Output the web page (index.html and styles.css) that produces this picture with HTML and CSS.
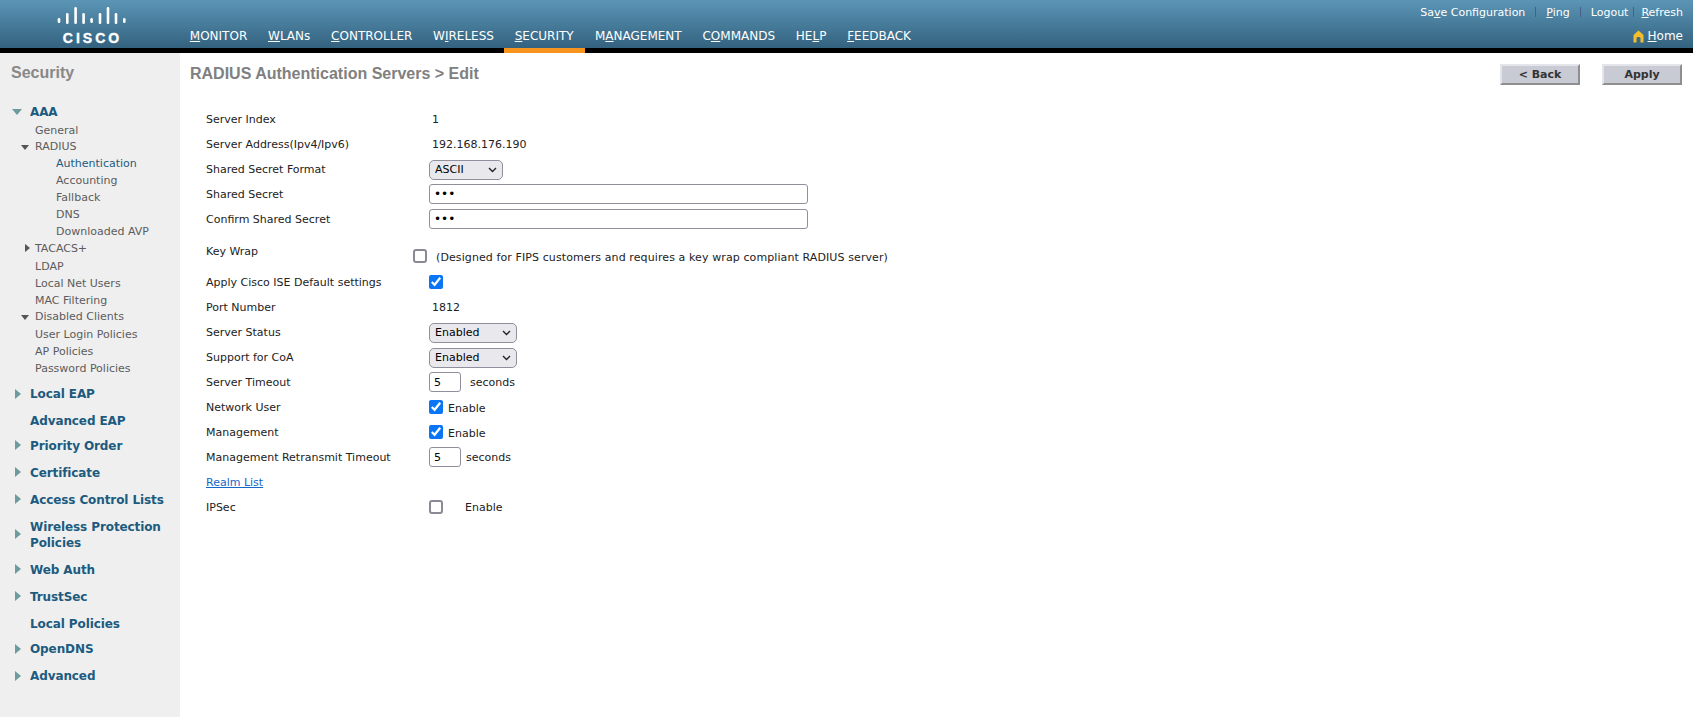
FILE: index.html
```html
<!DOCTYPE html>
<html>
<head>
<meta charset="utf-8" />
<title>RADIUS Authentication Servers &gt; Edit</title>
<link rel="stylesheet" href="styles.css">
</head>
<body>
<div class="header">
  <div class="logo">
    <svg class="logo-bars" width="69" height="19" viewBox="0 0 69 19">
      <g fill="#fff">
        <rect x="0.7" y="12" width="2.6" height="5" rx="1.3"/>
        <rect x="9" y="7" width="2.6" height="11" rx="1.3"/>
        <rect x="17.3" y="1" width="2.6" height="17" rx="1.3"/>
        <rect x="25.3" y="7" width="2.6" height="11" rx="1.3"/>
        <rect x="33.3" y="12" width="2.6" height="5" rx="1.3"/>
        <rect x="41.7" y="7" width="2.6" height="11" rx="1.3"/>
        <rect x="49.7" y="1" width="2.6" height="17" rx="1.3"/>
        <rect x="57.7" y="7" width="2.6" height="11" rx="1.3"/>
        <rect x="66" y="12" width="2.6" height="5" rx="1.3"/>
      </g>
    </svg>
    <div class="logo-name">CISCO</div>
  </div>
  <div class="nav">
    <a class="nav-item"><u>M</u>ONITOR</a>
    <a class="nav-item"><u>W</u>LANs</a>
    <a class="nav-item"><u>C</u>ONTROLLER</a>
    <a class="nav-item">W<u>I</u>RELESS</a>
    <a class="nav-item active"><u>S</u>ECURITY</a>
    <a class="nav-item">M<u>A</u>NAGEMENT</a>
    <a class="nav-item">C<u>O</u>MMANDS</a>
    <a class="nav-item">HE<u>L</u>P</a>
    <a class="nav-item"><u>F</u>EEDBACK</a>
  </div>
  <div class="top-right">
    <div class="top-links">
      <a>Sa<u>v</u>e Configuration</a><span class="sep"></span>
      <a><u>P</u>ing</a><span class="sep"></span>
      <a>Logout</a><span class="sep sep-tight"></span>
      <a><u>R</u>efresh</a>
    </div>
    <div class="home-link">
      <svg width="11" height="13" viewBox="0 0 11 13"><path d="M5.5 0.5 L10.5 5 V12.5 H7.5 V8 C7.5 6.5 3.5 6.5 3.5 8 V12.5 H0.5 V5 Z" fill="#f6bd2b"/></svg>
      <a><u>H</u>ome</a>
    </div>
  </div>
</div>

<div class="page">
  <div class="sidebar">
    <div class="side-title">Security</div>

    <div class="group open first"><span class="arrow-down big"></span>AAA</div>
    <div class="sub tight">General</div>
    <div class="sub"><span class="mini-down"></span>RADIUS</div>
    <div class="sub deep current">Authentication</div>
    <div class="sub deep">Accounting</div>
    <div class="sub deep">Fallback</div>
    <div class="sub deep">DNS</div>
    <div class="sub deep">Downloaded AVP</div>
    <div class="sub loose"><span class="mini-right"></span>TACACS+</div>
    <div class="sub">LDAP</div>
    <div class="sub">Local Net Users</div>
    <div class="sub tight">MAC Filtering</div>
    <div class="sub loose"><span class="mini-down"></span>Disabled Clients</div>
    <div class="sub">User Login Policies</div>
    <div class="sub">AP Policies</div>
    <div class="sub last">Password Policies</div>

    <div class="group"><span class="arrow-right"></span>Local EAP</div>
    <div class="group tighter">Advanced EAP</div>
    <div class="group"><span class="arrow-right"></span>Priority Order</div>
    <div class="group"><span class="arrow-right"></span>Certificate</div>
    <div class="group"><span class="arrow-right"></span>Access Control Lists</div>
    <div class="group two-line"><span class="arrow-right"></span>Wireless Protection Policies</div>
    <div class="group"><span class="arrow-right"></span>Web Auth</div>
    <div class="group"><span class="arrow-right"></span>TrustSec</div>
    <div class="group tight">Local Policies</div>
    <div class="group"><span class="arrow-right"></span>OpenDNS</div>
    <div class="group"><span class="arrow-right"></span>Advanced</div>
  </div>

  <div class="main">
    <div class="title-row">
      <h1 class="page-title">RADIUS Authentication Servers &gt; Edit</h1>
      <div class="buttons">
        <button class="btn">&lt; Back</button>
        <button class="btn">Apply</button>
      </div>
    </div>

    <table class="form">
      <tr><td class="lbl">Server Index</td><td><span class="val">1</span></td></tr>
      <tr><td class="lbl">Server Address(Ipv4/Ipv6)</td><td><span class="val">192.168.176.190</span></td></tr>
      <tr>
        <td class="lbl">Shared Secret Format</td>
        <td><div class="select narrow"><select><option>ASCII</option></select><svg class="chev" width="9" height="6" viewBox="0 0 9 6"><path d="M1 1 L4.5 4.5 L8 1" fill="none" stroke="#222" stroke-width="1.4"/></svg></div></td>
      </tr>
      <tr><td class="lbl">Shared Secret</td><td><input class="secret" type="password" value="abc"></td></tr>
      <tr><td class="lbl">Confirm Shared Secret</td><td><input class="secret" type="password" value="abc"></td></tr>
      <tr class="tall">
        <td class="lbl">Key Wrap</td>
        <td><div class="inline keywrap"><input type="checkbox"><span>(Designed for FIPS customers and requires a key wrap compliant RADIUS server)</span></div></td>
      </tr>
      <tr><td class="lbl">Apply Cisco ISE Default settings</td><td><div class="inline"><input type="checkbox" checked></div></td></tr>
      <tr><td class="lbl">Port Number</td><td><span class="val">1812</span></td></tr>
      <tr>
        <td class="lbl">Server Status</td>
        <td><div class="select"><select><option>Enabled</option></select><svg class="chev" width="9" height="6" viewBox="0 0 9 6"><path d="M1 1 L4.5 4.5 L8 1" fill="none" stroke="#222" stroke-width="1.4"/></svg></div></td>
      </tr>
      <tr>
        <td class="lbl">Support for CoA</td>
        <td><div class="select"><select><option>Enabled</option></select><svg class="chev" width="9" height="6" viewBox="0 0 9 6"><path d="M1 1 L4.5 4.5 L8 1" fill="none" stroke="#222" stroke-width="1.4"/></svg></div></td>
      </tr>
      <tr><td class="lbl">Server Timeout</td><td><div class="inline"><input class="short" type="text" value="5"><span class="unit wide">seconds</span></div></td></tr>
      <tr><td class="lbl">Network User</td><td><div class="inline"><input type="checkbox" checked><span class="unit low">Enable</span></div></td></tr>
      <tr><td class="lbl">Management</td><td><div class="inline"><input type="checkbox" checked><span class="unit low">Enable</span></div></td></tr>
      <tr><td class="lbl">Management Retransmit Timeout</td><td><div class="inline"><input class="short" type="text" value="5"><span class="unit">seconds</span></div></td></tr>
      <tr><td class="lbl"><a class="link">Realm List</a></td><td></td></tr>
      <tr><td class="lbl">IPSec</td><td><div class="inline"><input type="checkbox"><span class="unit far">Enable</span></div></td></tr>
    </table>
  </div>
</div>
</body>
</html>
```

FILE: styles.css
```css
html, body {
  margin: 0;
  height: 100%;
  overflow: hidden;
}
body {
  display: flex;
  flex-direction: column;
  background: #fff;
  color: #222;
  font-family: "DejaVu Sans", Verdana, sans-serif;
  font-size: 11px;
}

/* header */
.header {
  display: flex;
  flex: none;
  height: 48px;
  border-bottom: 5px solid #000;
  background: linear-gradient(#5b95b6, #33627f);
  color: #fff;
}
.logo {
  display: flex;
  flex-direction: column;
  align-items: center;
  box-sizing: border-box;
  width: 180px;
  padding: 6px 0 0 2px;
}
.logo-name {
  margin-top: 6px;
  padding-left: 3px;
  font-family: "Liberation Sans", Arial, sans-serif;
  font-size: 14px;
  font-weight: bold;
  line-height: 14px;
  letter-spacing: 3px;
  -webkit-text-stroke: 0.4px #fff;
}
.nav {
  display: flex;
  align-items: flex-end;
  margin-left: -0.6px;
}
.nav-item {
  height: 20px;
  margin-bottom: -5px;
  padding: 11px 10.4px 0;
  border-bottom: 5px solid transparent;
  font-size: 12px;
  line-height: 16px;
}
.nav-item.active {
  padding-right: 11px;
  border-bottom-color: #f7941d;
}
.top-right {
  display: flex;
  flex-direction: column;
  align-items: flex-end;
  margin-left: auto;
  padding-right: 10px;
}
.top-links {
  display: flex;
  align-items: center;
  height: 24px;
}
.sep {
  width: 1px;
  height: 10px;
  margin: 0 10px;
  background: #4a5c8c;
}
.sep-tight {
  margin: 0 7px 0 5px;
}
.home-link {
  display: flex;
  align-items: center;
  gap: 4px;
  height: 24px;
  font-size: 12px;
}

.page {
  display: flex;
  flex: 1;
  min-height: 0;
}

/* left menu */
.sidebar {
  flex: none;
  width: 180px;
  box-sizing: border-box;
  background: #efefef;
  color: #5c5c5c;
}
.side-title {
  margin: 10px 0 0 11px;
  color: #888;
  font-family: "Liberation Sans", Arial, sans-serif;
  font-size: 16px;
  font-weight: bold;
  line-height: 19px;
}
.group {
  position: relative;
  box-sizing: border-box;
  height: 27px;
  padding: 0 10px 0 30px;
  color: #1c5b7f;
  font-size: 12px;
  font-weight: bold;
  line-height: 27px;
  letter-spacing: -0.1px;
}
.group.tight {
  height: 25.5px;
}
.group.tighter {
  height: 24.5px;
}
.group.first {
  margin-top: 19px;
  height: 21px;
  line-height: 23px;
}
.group.two-line {
  height: 43px;
  padding-top: 5px;
  line-height: 16px;
}
.sub {
  position: relative;
  height: 17px;
  padding-left: 35px;
  line-height: 17px;
}
.sub.tight {
  height: 16px;
}
.sub.loose {
  height: 18px;
}
.sub.deep {
  padding-left: 56px;
}
.sub.current {
  color: #1c5b7f;
}
.sub.last {
  margin-bottom: 4px;
}
.arrow-down, .arrow-right, .mini-down, .mini-right {
  position: absolute;
  width: 0;
  height: 0;
  border-style: solid;
  border-color: transparent;
}
.arrow-down {
  left: 12px;
  top: 8px;
  border-width: 6px 5.5px 0;
  border-top-color: #6d9a9c;
}
.arrow-right {
  left: 15px;
  top: 50%;
  margin-top: -6px;
  border-width: 5.5px 0 5.5px 6px;
  border-left-color: #6d9a9c;
}
.mini-down {
  left: 21px;
  top: 7px;
  border-width: 5px 4px 0;
  border-top-color: #555;
}
.mini-right {
  left: 25px;
  top: 4px;
  border-width: 4.5px 0 4.5px 5px;
  border-left-color: #555;
}

/* content */
.main {
  flex: 1;
  min-width: 0;
  padding: 0 11px 0 10px;
}
.title-row {
  display: flex;
  justify-content: space-between;
  height: 53.5px;
}
.page-title {
  margin: 11px 0 0;
  color: #808080;
  font-family: "Liberation Sans", Arial, sans-serif;
  font-size: 16px;
  font-weight: bold;
  line-height: 20px;
}
.buttons {
  display: flex;
  gap: 22px;
  padding-top: 11px;
}
.btn {
  width: 80px;
  height: 21px;
  padding: 0;
  border: 2px solid;
  border-color: #e4e5ea #8e8e8e #8e8e8e #e4e5ea;
  background: #c8cad4;
  color: #333;
  font-family: "DejaVu Sans", Verdana, sans-serif;
  font-size: 11px;
  font-weight: bold;
}
.form {
  margin-left: 16px;
  border-collapse: collapse;
}
.form td {
  height: 25px;
  padding: 0;
  vertical-align: middle;
}
.form .tall td {
  height: 37px;
}
.form .tall .lbl {
  padding-top: 1px;
}
.lbl {
  width: 223px;
}
.val {
  padding-left: 3px;
}
.link {
  color: #1568c8;
  text-decoration: underline;
}
.inline {
  display: flex;
  align-items: center;
}
.keywrap {
  margin: 10px 0 0 -16px;
}
.keywrap span {
  margin: 3px 0 0 9px;
  letter-spacing: 0.1px;
}
.unit {
  margin-left: 5px;
}
.unit.low {
  margin-top: 2px;
}
.unit.wide {
  margin-left: 9px;
}
.unit.far {
  margin-left: 22px;
}
.form input[type="checkbox"] {
  width: 14px;
  height: 14px;
  margin: 0;
  accent-color: #0a76f6;
}
.form input[type="checkbox"]:not(:checked) {
  appearance: none;
  box-sizing: border-box;
  border: 2px solid #8a8a96;
  border-radius: 3px;
  background: #fff;
}
.form input[type="text"], .form input[type="password"] {
  box-sizing: border-box;
  height: 20px;
  padding: 0 4px;
  border: 1px solid #8f8f9d;
  border-radius: 3px;
  background: #fff;
  color: #000;
  font-family: "DejaVu Sans", Verdana, sans-serif;
  font-size: 11px;
}
.form input[type="password"] {
  font-size: 12px;
}
.secret {
  display: block;
  width: 379px;
}
.short {
  width: 32px;
}
.select {
  position: relative;
  width: 88px;
  height: 20px;
  margin-top: 1px;
}
.select.narrow {
  width: 74px;
}
.select select {
  appearance: none;
  display: block;
  width: 100%;
  height: 100%;
  padding: 0 0 0 5px;
  border: 1px solid #8f8f9d;
  border-radius: 5px;
  background: #e9e9ed;
  color: #000;
  font-family: "DejaVu Sans", Verdana, sans-serif;
  font-size: 11px;
}
.chev {
  position: absolute;
  right: 6px;
  top: 7px;
}
```
